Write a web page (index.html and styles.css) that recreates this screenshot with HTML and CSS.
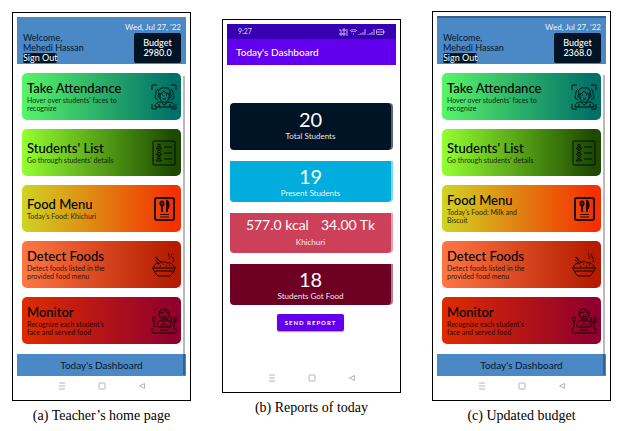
FILE: index.html
```html
<!DOCTYPE html>
<html lang="en">
<head>
<meta charset="utf-8">
<title>Teacher app screens</title>
<link rel="stylesheet" href="styles.css">
</head>
<body>
<svg class="sprite" aria-hidden="true">
  <symbol id="i-face" viewBox="0 0 26 26">
    <path d="M1 6V1h5M20 1h5v5M25 20v5h-5M6 25H1v-5"/>
    <path d="M8 10c-2-4 2-7 6-6 4-1 6 3 5 6M8 10c3 0 4-2 5-3 1 2 4 3 6 3M9 10v3c0 7 9 7 9 0v-3M8 10c-2 1-1 4 1 4M19 10c2 1 1 4-1 4M11 11h1M15 11h1M12 15h3"/>
    <path d="M7 5c-3 2-2 6-3 9l3 2M20 5c3 2 2 6 3 9l-3 2M4 23c0-4 3-5 6-5l3 3 4-3c3 0 6 1 6 5zM8 20v3M19 20v3"/>
  </symbol>
  <symbol id="i-list" viewBox="0 0 26 26">
    <rect x="2" y="1" width="22" height="24" rx="1"/>
    <path d="M13 7h8M13 13h8M13 19h8"/>
    <circle cx="8" cy="5.500" r="1.300"/><path d="M5.500 9c0-3 5-3 5 0z"/>
    <circle cx="8" cy="11.500" r="1.300"/><path d="M5.500 15c0-3 5-3 5 0z"/>
    <circle cx="8" cy="17.500" r="1.300"/><path d="M5.500 21c0-3 5-3 5 0z"/>
  </symbol>
  <symbol id="i-menu" viewBox="0 0 26 26">
    <rect class="bold" x="4" y="2" width="19" height="22" rx="2"/>
    <ellipse class="bold" cx="11" cy="7.500" rx="1.500" ry="2"/>
    <path class="bold" d="M11 9v7M16 16V5c2 1 2 5 1 7h-1"/><path d="M9 18.500h9M9 21h9"/>
  </symbol>
  <symbol id="i-bowl" viewBox="0 0 26 26">
    <path d="M1 16h24M2 16c1 4 3 6 5 8h12c2-2 4-4 5-8M4 19h18"/>
    <path d="M3 15c0-3 3-4 5-3 2-3 6-3 8-1 3-1 6 1 7 4M5 6l6 5M4 8l5 4M4 6c1-2 3 0 3 2M9 14h1M12 12h1M15 14h1M18 13h1"/>
    <path d="M18 1c-2 2 2 3 0 6M21 2c-2 2 3 4 1 8"/>
  </symbol>
  <symbol id="i-diner" viewBox="0 0 26 26">
    <circle cx="13" cy="6" r="5"/>
    <path d="M8 5c3 0 5-1 6-2 1 1 2 2 4 2M11 8c1 1 3 1 4 0M6 19c0-5 2-7 5-7l2 2 2-2c3 0 5 2 5 7M10 18c1-3 5-3 6 0M7 19h12M3 20c-3 0-3 5 0 5h20c3 0 3-5 0-5M9 22h8"/>
    <path d="M3 19v-5c-2-1-2-5 0-5s2 4 0 5M23 19V9M20 9v4c0 2 5 2 5 0V9"/>
  </symbol>
  <symbol id="i-recent" viewBox="0 0 8 8"><path d="M1 1h6M1 4h6M1 7h6"/></symbol>
  <symbol id="i-home" viewBox="0 0 8 8"><rect x="1" y="1" width="6" height="6" rx="1"/></symbol>
  <symbol id="i-back" viewBox="0 0 8 8"><path d="M6.500 1.500v5L1.500 4z"/></symbol>
</svg>

<main class="board">
  <figure class="shot shot-a">
    <div class="phone">
      <header class="top">
        <div class="who"><span>Welcome,</span><span>Mehedi Hassan</span><button class="signout">Sign Out</button></div>
        <div class="side"><time>Wed, Jul 27, '22</time><div class="budget"><span>Budget</span><span>2980.0</span></div></div>
      </header>
      <div class="cards">
        <a href="#attendance" class="card attend"><span class="text"><strong>Take Attendance</strong><small>Hover over students' faces to<br>recognize</small></span><svg class="icon"><use href="#i-face"/></svg></a>
        <a href="#students" class="card list"><span class="text"><strong>Students' List</strong><small>Go through students' details</small></span><svg class="icon"><use href="#i-list"/></svg></a>
        <a href="#menu" class="card menu"><span class="text"><strong>Food Menu</strong><small>Today's Food: Khichuri</small></span><svg class="icon"><use href="#i-menu"/></svg></a>
        <a href="#detect" class="card detect"><span class="text"><strong>Detect Foods</strong><small>Detect foods listed in the<br>provided food menu</small></span><svg class="icon"><use href="#i-bowl"/></svg></a>
        <a href="#monitor" class="card monitor"><span class="text"><strong>Monitor</strong><small>Recognize each student's<br>face and served food</small></span><svg class="icon"><use href="#i-diner"/></svg></a>
      </div>
      <button class="dash">Today's Dashboard</button>
      <nav class="keys"><svg><use href="#i-recent"/></svg><svg><use href="#i-home"/></svg><svg><use href="#i-back"/></svg></nav>
      <div class="scroll"></div>
    </div>
    <figcaption>(a) Teacher’s home page</figcaption>
  </figure>

  <figure class="shot shot-b">
    <div class="phone">
      <div class="status"><span>9:27</span>
        <svg class="signals" viewBox="0 0 46 8">
          <path d="M1 1v2h2M4 1v2h2V1zM1 5h2v2H1zM4 5h2v2H4zM8 1v5M7 7h2"/>
          <path d="M11 3c2-2 5-2 7 0M12 4c1-1 4-1 5 0M14 6h1"/>
          <path d="M20 7V6M22 7V5M24 7V4M26 7V1M29 7V6M31 7V5M33 7V4M35 7V1"/>
          <rect x="37.500" y="1.500" width="7" height="5" rx="1"/><path d="M39 3v2M41 3v2M43 3v2M46 3v2"/>
        </svg>
      </div>
      <header class="appbar">Today's Dashboard</header>
      <div class="stats">
        <section class="stat total"><b>20</b><span>Total Students</span></section>
        <section class="stat present"><b>19</b><span>Present Students</span></section>
        <section class="stat meal"><div class="pair"><b>577.0 kcal</b><b>34.00 Tk</b></div><span>Khichuri</span></section>
        <section class="stat fed"><b>18</b><span>Students Got Food</span></section>
        <button class="send">SEND REPORT</button>
      </div>
      <nav class="keys"><svg><use href="#i-recent"/></svg><svg><use href="#i-home"/></svg><svg><use href="#i-back"/></svg></nav>
    </div>
    <figcaption>(b) Reports of today</figcaption>
  </figure>

  <figure class="shot shot-c">
    <div class="phone">
      <header class="top">
        <div class="who"><span>Welcome,</span><span>Mehedi Hassan</span><button class="signout">Sign Out</button></div>
        <div class="side"><time>Wed, Jul 27, '22</time><div class="budget"><span>Budget</span><span>2368.0</span></div></div>
      </header>
      <div class="cards">
        <a href="#attendance" class="card attend"><span class="text"><strong>Take Attendance</strong><small>Hover over students' faces to<br>recognize</small></span><svg class="icon"><use href="#i-face"/></svg></a>
        <a href="#students" class="card list"><span class="text"><strong>Students' List</strong><small>Go through students' details</small></span><svg class="icon"><use href="#i-list"/></svg></a>
        <a href="#menu" class="card menu"><span class="text"><strong>Food Menu</strong><small>Today's Food: Milk and<br>Biscuit</small></span><svg class="icon"><use href="#i-menu"/></svg></a>
        <a href="#detect" class="card detect"><span class="text"><strong>Detect Foods</strong><small>Detect foods listed in the<br>provided food menu</small></span><svg class="icon"><use href="#i-bowl"/></svg></a>
        <a href="#monitor" class="card monitor"><span class="text"><strong>Monitor</strong><small>Recognize each student's<br>face and served food</small></span><svg class="icon"><use href="#i-diner"/></svg></a>
      </div>
      <button class="dash">Today's Dashboard</button>
      <nav class="keys"><svg><use href="#i-recent"/></svg><svg><use href="#i-home"/></svg><svg><use href="#i-back"/></svg></nav>
      <div class="scroll"></div>
    </div>
    <figcaption>(c) Updated budget</figcaption>
  </figure>
</main>
</body>
</html>
```
FILE: styles.css
```css
* { box-sizing: border-box; }
body { margin: 0; background: #fff; color: #000; font-family: Lato, "Liberation Sans", sans-serif; }
button { font: inherit; border: 0; padding: 0; margin: 0; }
.sprite { display: none; }
svg { fill: none; stroke: currentColor; stroke-width: 1; }
.bold { stroke-width: 2; }

.board { display: grid; grid-template-columns: repeat(3, 1fr); gap: 31px; padding: 11px 14px 0 12px; align-items: start; }
.shot { margin: 0; min-width: 0; }
.shot-a { margin-top: 1px; }
.shot-b { margin-top: 8px; }
.phone { position: relative; border: 1px solid #000; padding: 4px; background: #fff; }
figcaption { font: 14px/18px "Liberation Serif", serif; text-align: center; padding-top: 6px; white-space: nowrap; }

.top { display: flex; justify-content: space-between; align-items: flex-end; background: #4a88c6; padding: 5px 5px 1px 6px; font-size: 9px; line-height: 10px; color: #061626; }
.shot-c .top { border-top: 2px solid #34608f; padding-top: 4px; }
.who { display: flex; flex-direction: column; align-items: flex-start; }
.signout { background: #001425; color: #fff; border-radius: 2px; line-height: 10px; }
.side { display: flex; flex-direction: column; align-items: flex-end; gap: 1px; white-space: nowrap; }
.side time { color: #eaf3fb; font-size: 8px; }
.budget { display: flex; flex-direction: column; align-items: center; background: #001425; color: #fff; border-radius: 2px; width: 47px; padding: 5px 0; font-weight: 500; }

.cards { display: flex; flex-direction: column; gap: 9px; padding: 9px 5px 10px; }
.card { display: flex; align-items: center; justify-content: space-between; height: 47px; border-radius: 5px; padding: 0 4px 0 5px; color: #000; text-decoration: none; }
.text { display: flex; flex-direction: column; white-space: nowrap; padding-bottom: 2px; }
.text strong { font-size: 13px; line-height: 16px; font-weight: 500; }
.text small { font-size: 7px; line-height: 8px; opacity: .8; }
.icon { width: 26px; height: 26px; flex: none; opacity: .85; }
.attend { background: linear-gradient(90deg, #58f568, #007068 95%); }
.list { background: linear-gradient(90deg, #94ff30, #1d4a00 95%); }
.menu { background: linear-gradient(90deg, #cfd522, #f33000 95%); }
.detect { background: linear-gradient(90deg, #ff7743, #b41b00 95%); }
.monitor { background: linear-gradient(90deg, #df2b00, #8f002d 95%); }
.dash { display: block; width: 100%; background: #4a88c6; color: #061626; font-size: 10px; line-height: 22px; }
.scroll { position: absolute; top: 63px; right: 5px; bottom: 25px; width: 2px; background: rgba(0, 0, 0, .27); }

.keys { display: flex; justify-content: center; gap: 32px; padding: 6px 0; color: #b4b4b4; }
.keys svg { width: 8px; height: 8px; }

.status { display: flex; justify-content: space-between; align-items: center; background: #3700b3; color: #e4dcf7; font-size: 7px; line-height: 15px; padding: 0 11px; }
.signals { width: 46px; height: 8px; opacity: .8; }
.appbar { background: #6200ee; color: #fff; font-size: 10px; font-weight: 500; line-height: 26px; padding-left: 9px; }
.stats { display: flex; flex-direction: column; padding: 38px 5px 0 3px; min-height: 303px; }
.stat { display: flex; flex-direction: column; align-items: center; color: #fff; border-radius: 0 0 4px 4px; margin: 0 0 11px; padding: 4px 0 3px; font-size: 8px; line-height: 12px; }
.stat b { font-size: 20px; line-height: 22px; font-weight: 400; }
.stat span { opacity: .9; }
.total { background: #001425; border-radius: 4px; padding: 5px 0 8px; box-shadow: 2px 0 #5b6873; }
.present { background: #00addc; box-shadow: 2px 0 #7fd6ed; }
.meal { background: #cd4059; box-shadow: 2px 0 #e59fac; padding: 1px 0 5px; }
.fed { background: #6e0024; box-shadow: 2px 0 #b67f91; margin-bottom: 9px; }
.stat .pair b { font-size: 14px; }
.pair { display: flex; gap: 12px; }
.send { align-self: center; background: #6200ee; color: #fff; border-radius: 2px; font-size: 6px; font-weight: 700; line-height: 17px; padding: 0 8px; letter-spacing: 1px; box-shadow: 0 1px 1px #b394dc; }
```
